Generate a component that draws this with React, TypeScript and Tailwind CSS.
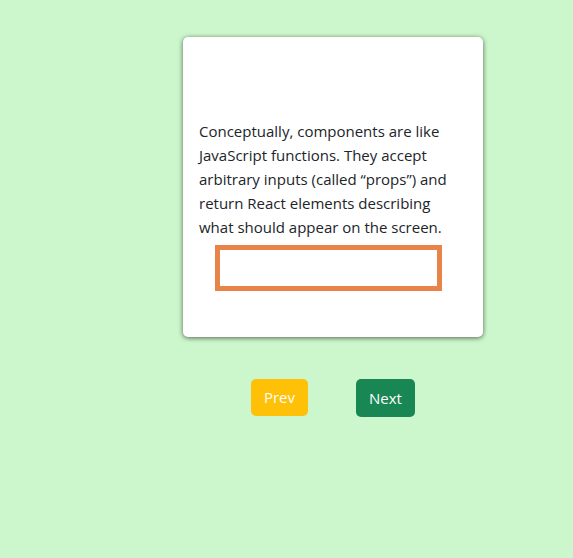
export default function App() {
  return (
    <div className="min-h-[558px] w-full bg-[#ccf7cc] pt-[37px]" style={{ fontFamily: '"Open Sans", "Noto Sans", sans-serif' }}>
      <div className="ml-[183px] flex w-[300px] flex-col items-center">
        <div className="flex h-[300px] w-[300px] flex-col rounded-[5px] bg-white px-4 pt-[82px] shadow-[0_1px_5px_rgba(0,0,0,0.6)]">
          <p className="text-[15px] leading-[24px] text-[#212529]">
            Conceptually, components are like JavaScript functions. They accept arbitrary inputs (called “props”) and return React elements describing what should appear on the screen.
          </p>
          <div className="mt-[6px] ml-[16px] h-[46px] w-[227px] border-[5px] border-[#e8834a]" />
        </div>
        <div className="mt-[42px] flex gap-[48px]">
          <button className="h-[37px] w-[57px] rounded-[5px] bg-[#ffc107] text-[15px] text-white">Prev</button>
          <button className="h-[38px] w-[59px] rounded-[5px] bg-[#198754] text-[15px] text-white">Next</button>
        </div>
      </div>
    </div>
  );
}
